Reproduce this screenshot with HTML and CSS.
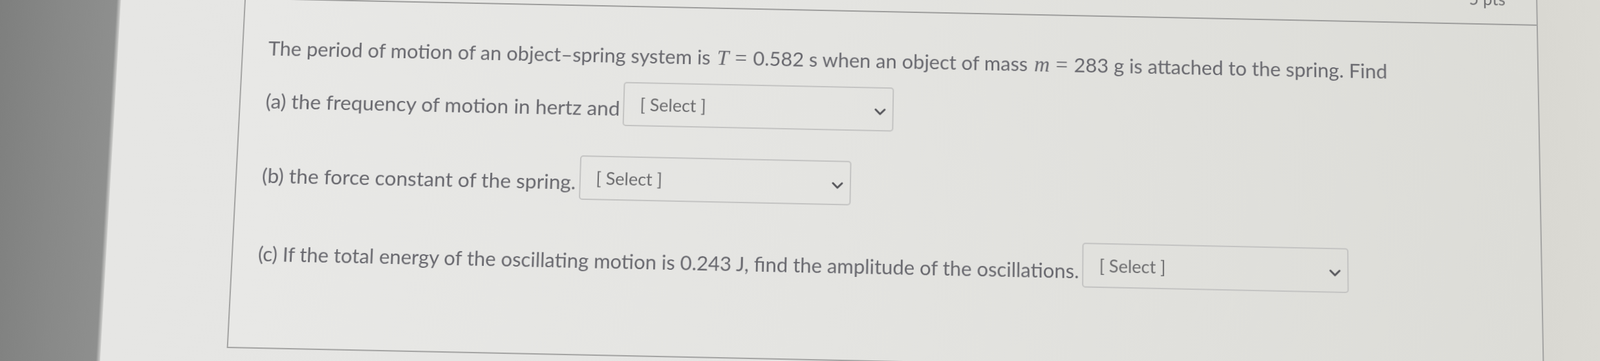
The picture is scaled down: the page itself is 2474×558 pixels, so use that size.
FILE: index.html
```html
<!DOCTYPE html>
<html lang="en">
<head>
<meta charset="utf-8">
<title>Quiz question</title>
<link rel="stylesheet" href="styles.css">
</head>
<body>
<div class="scene">
  <div class="bezel"></div>
  <div class="desk">
    <section class="question">
      <header class="q-header"><span class="pts">5 pts</span></header>
      <div class="q-body">
        <p class="stem">The period of motion of an object–spring system is <span class="math"><i class="mi">T</i><span class="mo">=</span></span>0.582 s when an object of mass <span class="math"><i class="mi">m</i><span class="mo">=</span></span>283 g is attached to the spring. Find</p>
        <p class="part part-a">(a) the frequency of motion in hertz and<span class="dropdown"><span class="dd-label">[ Select ]</span><svg class="chev" viewBox="0 0 18 11" width="18" height="11"><polyline points="2,2 9,9 16,2"/></svg></span></p>
        <p class="part part-b">(b) the force constant of the spring.<span class="dropdown"><span class="dd-label">[ Select ]</span><svg class="chev" viewBox="0 0 18 11" width="18" height="11"><polyline points="2,2 9,9 16,2"/></svg></span></p>
        <p class="part part-c">(c) If the total energy of the oscillating motion is 0.243 J, find the amplitude of the oscillations.<span class="dropdown dd-low"><span class="dd-label">[ Select ]</span><svg class="chev" viewBox="0 0 18 11" width="18" height="11"><polyline points="2,2 9,9 16,2"/></svg></span></p>
      </div>
    </section>
    <div class="edge"></div>
  </div>
</div>
</body>
</html>
```
FILE: styles.css
```css
html, body {
  margin: 0;
  padding: 0;
}

body {
  width: 2474px;
  height: 558px;
  overflow: hidden;
  background: #e3e3e1;
  font-family: Lato, "Noto Sans", sans-serif;
  color: #68686e;
}

.scene {
  display: flex;
  width: 2554px;
  height: 678px;
  margin: -60px -40px;
  transform-origin: 1277px 339px;
  transform: perspective(2500px) rotateX(4.9deg) rotate(1.2deg);
}

.bezel {
  flex: none;
  width: 211px;
  background: linear-gradient(90deg, #7c7d7c 0%, #888988 60%, #8e8f8e 97%, #cfcfcd 100%);
}

.desk {
  flex: 1;
  display: flex;
  padding-left: 193px;
  background: linear-gradient(90deg, #e6e6e4 0%, #e2e2e0 100%);
}

.question {
  flex: none;
  width: 2018px;
  box-sizing: border-box;
  align-self: flex-start;
  border: 2px solid #a3a3a2;
  border-top: none;
  background: linear-gradient(90deg, #e8e8e6 0%, #e4e4e1 45%, #dcdcd7 100%);
}

.q-header {
  display: flex;
  justify-content: flex-end;
  height: 73px;
  box-sizing: border-box;
  padding: 17px 48px 0 0;
  border-bottom: 2px solid #9c9c9b;
}

.pts {
  font-size: 26px;
  line-height: 30px;
  color: #707072;
}

.q-body {
  padding: 54px 0 118px 39px;
}

.stem,
.part {
  margin: 0;
  line-height: 45px;
  white-space: nowrap;
}

.stem {
  font-size: 31px;
  margin-bottom: 19px;
}

.part-a {
  font-size: 31.8px;
  margin-bottom: 47px;
}

.part-b {
  font-size: 31.7px;
  margin-bottom: 50px;
}

.part-c {
  font-size: 30.9px;
}

.math {
  font-family: "Liberation Serif", "DejaVu Serif", serif;
  font-size: 1.08em;
  margin-left: 2px;
}

.mi {
  font-style: italic;
}

.mo {
  display: inline-block;
  margin: 0 0.28em;
}

.dropdown {
  display: inline-flex;
  align-items: center;
  justify-content: space-between;
  width: 420px;
  height: 69px;
  box-sizing: border-box;
  margin-left: 5px;
  padding: 0 10px 0 24px;
  border: 2px solid #c3c3c2;
  border-radius: 5px;
  vertical-align: 8px;
  line-height: 1;
}

.dd-low {
  width: 410px;
  vertical-align: 10px;
}

.dd-label {
  font-size: 27px;
  color: #6c6c6e;
}

.chev {
  flex: none;
  margin-top: 8px;
}

.chev polyline {
  fill: none;
  stroke: #55555a;
  stroke-width: 3;
  stroke-linecap: round;
  stroke-linejoin: round;
}

.edge {
  flex: 1;
  background: linear-gradient(90deg, #d9d8d2 0%, #dcdbd5 100%);
}
```
